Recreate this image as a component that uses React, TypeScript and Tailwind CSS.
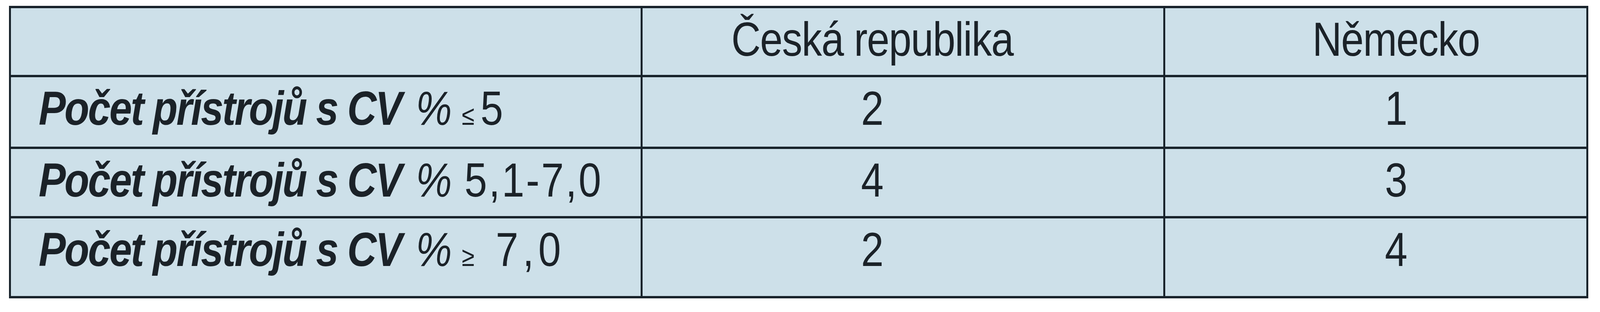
type Row = {
  op: string | null
  value: string
  valueClass: string
  cz: string
  de: string
  height: string
}

// window is 4096 wide, the reference 4834: horizontal measures are squeezed by 0.847
const rows: Row[] = [
  { op: '≤', value: '5', valueClass: 'ml-[18px]', cz: '2', de: '1', height: 'h-[184px]' },
  { op: null, value: '5,1-7,0', valueClass: 'ml-[38px] tracking-[5px]', cz: '4', de: '3', height: 'h-[178px]' },
  { op: '≥', value: '7,0', valueClass: 'ml-[64px] tracking-[13px]', cz: '2', de: '4', height: 'h-[205px]' },
]

const cell = 'pt-[18px] leading-none whitespace-nowrap'
const squeeze = 'inline-block scale-x-[0.847]'

export default function App() {
  return (
    <div className="w-full h-[800px] bg-white pt-[15px] pl-[23px] font-['Liberation_Sans',Arial,sans-serif] text-[123px] text-[#1b2228]">
      <div className="w-[4043px] border-x-[5px] border-y-[6px] border-[#18232b] bg-[#cde0e9]">
        {/* header */}
        <div className="grid grid-cols-[1612px_1338px_1083px] h-[171px]">
          <div />
          <div className={`${cell} border-l-[5px] border-[#18232b] text-center pr-[157px]`}>
            <span className={`${squeeze} origin-center tracking-[-2px]`}>Česká republika</span>
          </div>
          <div className={`${cell} border-l-[5px] border-[#18232b] text-center pl-[104px]`}>
            <span className={`${squeeze} origin-center tracking-[-2px]`}>Německo</span>
          </div>
        </div>

        {rows.map((row, i) => (
          <div
            key={i}
            className={`grid grid-cols-[1612px_1338px_1083px] border-t-[6px] border-[#18232b] ${row.height}`}
          >
            <div className={`${cell} pl-[71px]`}>
              <span className={`${squeeze} origin-left`}>
                <span className="font-bold italic tracking-[-4px]">Počet přístrojů s CV</span>
                <span className="italic ml-[44px]">%</span>
                {row.op && <span className="text-[70px] ml-[30px]">{row.op}</span>}
                <span className={row.valueClass}>{row.value}</span>
              </span>
            </div>
            <div className={`${cell} border-l-[5px] border-[#18232b] text-center pr-[157px]`}>
              <span className={`${squeeze} origin-center`}>{row.cz}</span>
            </div>
            <div className={`${cell} border-l-[5px] border-[#18232b] text-center pl-[104px]`}>
              <span className={`${squeeze} origin-center`}>{row.de}</span>
            </div>
          </div>
        ))}
      </div>
    </div>
  )
}
